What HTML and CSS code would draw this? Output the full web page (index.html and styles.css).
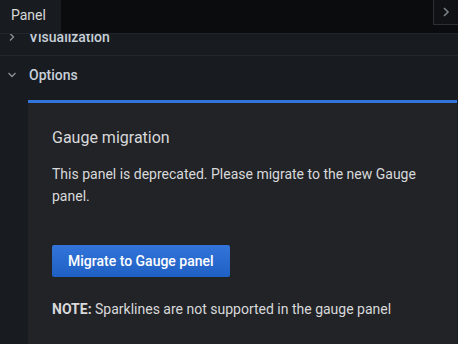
FILE: index.html
```html
<!DOCTYPE html>
<html>
<head>
<meta charset="utf-8">
<link rel="stylesheet" href="styles.css">
</head>
<body>
<div class="app">
  <div class="tabbar">
    <div class="tab">Panel</div>
    <div class="collapse">
      <svg width="8" height="12" viewBox="0 0 8 12"><path d="M2 2 L6 6 L2 10" fill="none" stroke="#7b8087" stroke-width="1.6"/></svg>
    </div>
  </div>
  <div class="pane">
    <div class="section first">
      <svg class="chev" width="10" height="10" viewBox="0 0 10 10"><path d="M3 1.5 L6.5 5 L3 8.5" fill="none" stroke="#8e9399" stroke-width="1.3"/></svg>
      <span class="label">Visualization</span>
    </div>
    <div class="section open">
      <svg class="chev" width="10" height="10" viewBox="0 0 10 10"><path d="M1.5 3 L5 6.5 L8.5 3" fill="none" stroke="#8e9399" stroke-width="1.3"/></svg>
      <span class="label">Options</span>
    </div>
    <div class="card">
      <h3 class="title">Gauge migration</h3>
      <p class="text">This panel is deprecated. Please migrate to the new Gauge panel.</p>
      <button class="btn">Migrate to Gauge panel</button>
      <p class="note"><b>NOTE:</b> Sparklines are not supported in the gauge panel</p>
    </div>
  </div>
</div>
</body>
</html>
```
FILE: styles.css
```css
* { box-sizing: border-box; }
html, body { margin: 0; padding: 0; }
body {
  width: 458px;
  height: 344px;
  overflow: hidden;
  background: #181b1f;
  font-family: Roboto, "Liberation Sans", sans-serif;
  color: #d8d9da;
}
.app { height: 344px; display: flex; flex-direction: column; }
.tabbar {
  height: 34px;
  display: flex;
  align-items: flex-start;
  background: #0b0c0e;
  border-bottom: 1px solid #22252b;
  position: relative;
  z-index: 2;
  flex-shrink: 0;
}
.tab {
  width: 61px;
  height: 33px;
  background: #181b1f;
  font-size: 14px;
  line-height: 30px;
  padding-left: 11px;
  color: #d8d9da;
}
.collapse {
  margin-left: auto;
  width: 25px;
  height: 25px;
  border-left: 1px solid #2c3034;
  border-bottom: 1px solid #2c3034;
  background: #111215;
  display: flex;
  align-items: center;
  justify-content: center;
}
.pane { flex: 1; overflow: hidden; background: #181b1f; }
.section {
  height: 37px;
  display: flex;
  align-items: center;
  padding-left: 7px;
  border-bottom: 1px solid #24272c;
  font-size: 14px;
  font-weight: 500;
  color: #c7d0d9;
}
.section.first { margin-top: -15px; }
.section.open { border-bottom: none; height: 37px; }
.chev { margin-right: 12px; }
.card {
  margin: 7px 1px 0 28px;
  background: #222327;
  border-top: 3px solid #3274d9;
  padding: 24px 24px 40px 24px;
}
.title {
  margin: 0 0 14px;
  font-size: 16px;
  font-weight: 400;
  line-height: 22px;
  color: #d8d9da;
}
.text {
  margin: 0 0 38px;
  font-size: 14px;
  line-height: 22px;
  color: #d8d9da;
}
.btn {
  display: block;
  height: 32px;
  padding: 0 16px;
  border: none;
  border-radius: 2px;
  background: linear-gradient(180deg, #3274d9, #1f60c4);
  color: #fff;
  font-family: Roboto, "Liberation Sans", sans-serif;
  font-size: 14px;
  font-weight: 500;
}
.note {
  margin: 22px 0 0;
  font-size: 14px;
  line-height: 20px;
  color: #d8d9da;
}
.note b { font-weight: 700; }
```
